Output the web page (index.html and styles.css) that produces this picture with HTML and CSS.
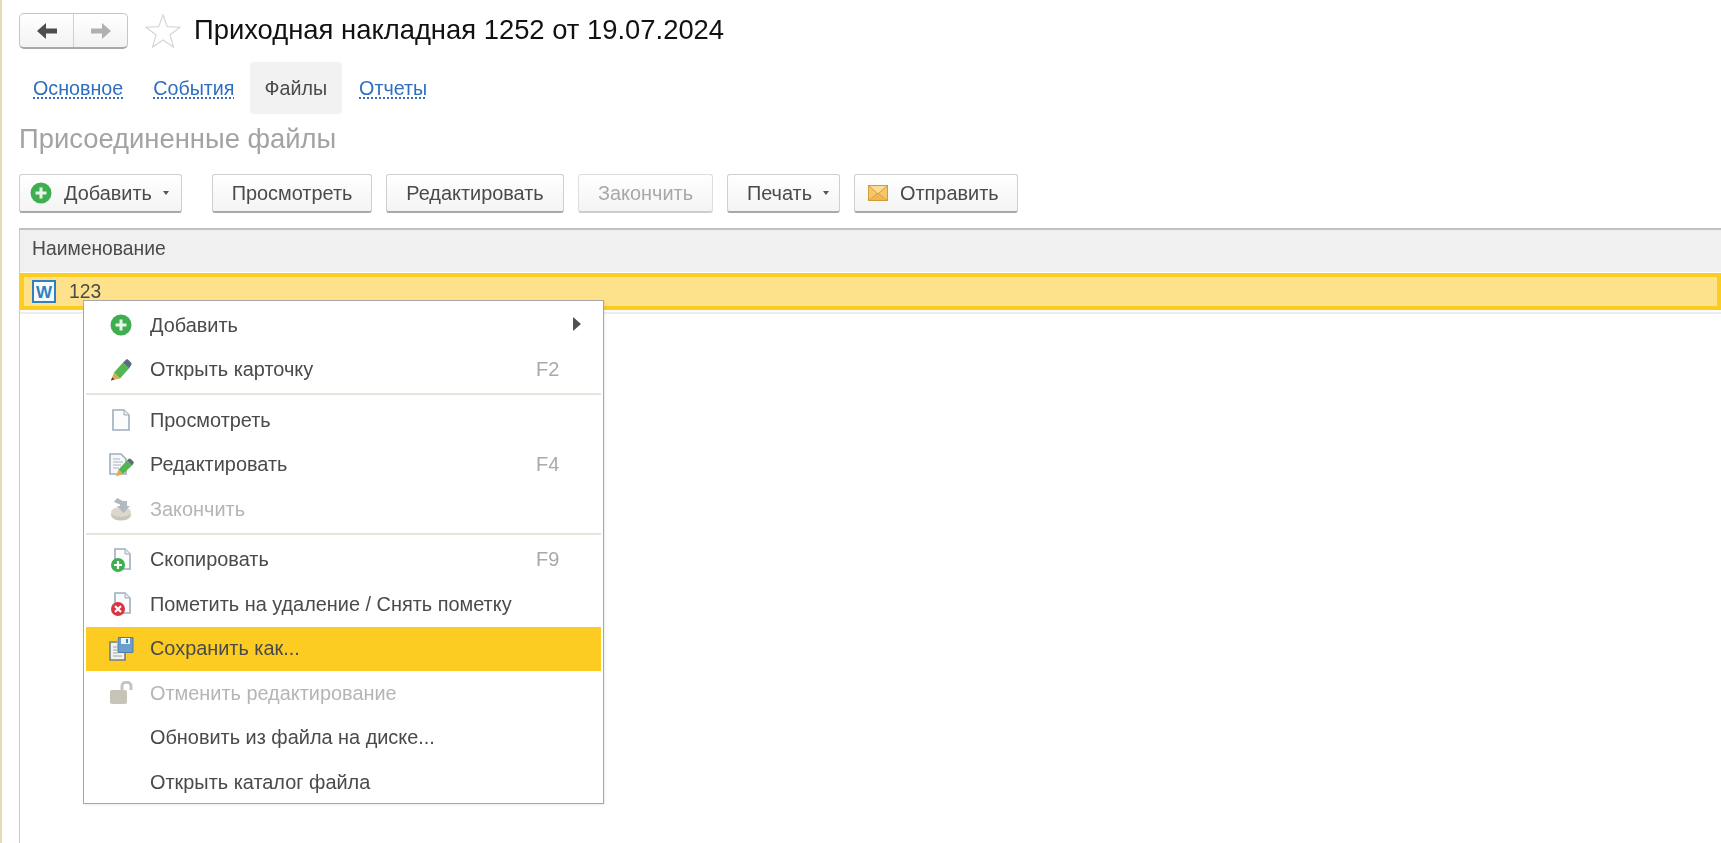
FILE: index.html
```html
<!DOCTYPE html>
<html lang="ru">
<head>
<meta charset="utf-8">
<title>Приходная накладная 1252</title>
<link rel="stylesheet" href="styles.css">
</head>
<body>
<div class="page">
  <header class="titlebar">
    <div class="navgroup">
      <button class="navbtn"><svg width="22" height="18" viewBox="0 0 22 18"><path d="M1 9 10 1v5.500h11v5H10V17z" fill="#4d4d4d"/></svg></button>
      <button class="navbtn"><svg width="22" height="18" viewBox="0 0 22 18"><path d="M21 9 12 1v5.500H1v5h11V17z" fill="#b0b0b0"/></svg></button>
    </div>
    <svg class="star" width="36" height="36" viewBox="0 0 36 36"><path d="M18 2l4.300 11.600 12.700.6-10 7.700 3.500 12.100L18 26.900 7.500 34l3.500-12.100-10-7.700 12.700-.6z" fill="#fff" stroke="#d3d7da" stroke-width="1.200"/></svg>
    <h1 class="title">Приходная накладная 1252 от 19.07.2024</h1>
  </header>
  <nav class="tabs">
    <a class="tab">Основное</a>
    <a class="tab">События</a>
    <a class="tab tab-active">Файлы</a>
    <a class="tab tab-last">Отчеты</a>
  </nav>
  <h2 class="heading">Присоединенные файлы</h2>
  <div class="toolbar">
    <button class="btn btn-add"><svg class="plus" width="22" height="22" viewBox="0 0 22 22"><circle cx="11" cy="11" r="10.500" fill="#3fae4e"/><path d="M11 5.500v11M5.500 11h11" stroke="#e8f6ea" stroke-width="3"/></svg>Добавить<span class="caret"></span></button>
    <button class="btn btn-view">Просмотреть</button>
    <button class="btn btn-edit">Редактировать</button>
    <button class="btn btn-end" disabled>Закончить</button>
    <button class="btn btn-print">Печать<span class="caret"></span></button>
    <button class="btn btn-send"><svg class="mail" width="20" height="16" viewBox="0 0 20 16"><rect x=".5" y=".5" width="19" height="15" fill="#f6c766" stroke="#d39a3a"/><path d="M1 15l9-7 9 7" fill="#f1b650" stroke="#dca548"/><path d="M1 1l9 8 9-8" fill="#fbdc93" stroke="#d39a3a"/></svg>Отправить</button>
  </div>
  <section class="table">
    <div class="thead">Наименование</div>
    <div class="row"><svg class="word" width="24" height="23" viewBox="0 0 24 23"><rect x="1" y="1" width="22" height="21" fill="#f7fbfd" stroke="#2f7fc1" stroke-width="2"/><text x="12" y="18" text-anchor="middle" class="word-w">W</text></svg><span>123</span></div>
    <div class="rowline"></div>
  </section>
  <div class="menu">
    <div class="item"><span class="ic"><svg width="22" height="22" viewBox="0 0 22 22"><circle cx="11" cy="11" r="10.500" fill="#3fae4e"/><path d="M11 5.500v11M5.500 11h11" stroke="#e8f6ea" stroke-width="3"/></svg></span><span class="lbl">Добавить</span><span class="arrow"></span></div>
    <div class="item"><span class="ic"><svg width="22" height="22" viewBox="0 0 22 22"><path d="M1 21.500l3-8 6 6z" fill="#e3a94f"/><path d="M1 21.500l1.200-3.300 2.200 2.200z" fill="#444"/><path d="M4 13.500L13 3.500l6 6-9 10z" fill="#55b553"/><path d="M13 3.500l3-2.700c.8-.6 1.500-.6 2.200 0l3 3c.6.700.6 1.400 0 2.200L19 9.500z" fill="#5a6b7c"/></svg></span><span class="lbl">Открыть карточку</span><span class="key">F2</span></div>
    <div class="sep"></div>
    <div class="item"><span class="ic"><svg width="18" height="22" viewBox="0 0 18 22"><path d="M1 1h11l5 5v15H1z" fill="#fbfcfd" stroke="#9fadba" stroke-width="1.600"/><path d="M12 1v5h5" fill="#e6ebef" stroke="#9fadba"/></svg></span><span class="lbl">Просмотреть</span></div>
    <div class="item"><span class="ic"><svg width="25" height="24" viewBox="0 0 25 24"><path d="M1 1h11l5 5v15H1z" fill="#f6f8fa" stroke="#9fadba" stroke-width="1.600"/><path d="M4 6h7M4 9h10M4 12h8M4 15h6" stroke="#a9b5c0"/><path d="M7 23.500l2.500-7 4.500 4.500z" fill="#e3a94f"/><path d="M9.500 16.500L18 7.500l5 5-9 8.500z" fill="#55b553"/><path d="M18 7.500l1.500-1.500c.8-.7 1.600-.7 2.300 0l2.500 2.500c.6.700.6 1.500 0 2.300L23 12.500z" fill="#5a6b7c"/></svg></span><span class="lbl">Редактировать</span><span class="key">F4</span></div>
    <div class="item off"><span class="ic"><svg width="22" height="24" viewBox="0 0 22 24"><ellipse cx="11" cy="18" rx="10" ry="5.500" fill="#c9c5b8"/><ellipse cx="11" cy="15" rx="10" ry="5" fill="#dad7cc"/><path d="M4 5l3-4 6 3h4v5h3l-6.500 7L7 9h3V7.500z" fill="#b2b9bf"/></svg></span><span class="lbl">Закончить</span></div>
    <div class="sep"></div>
    <div class="item"><span class="ic"><svg width="22" height="24" viewBox="0 0 22 24"><path d="M5 1h10l5 5v15H5z" fill="#fbfcfd" stroke="#9fadba" stroke-width="1.600"/><path d="M15 1v5h5" fill="#e6ebef" stroke="#9fadba"/><circle cx="8" cy="17" r="7" fill="#3fae4e"/><path d="M8 13v8M4 17h8" stroke="#fff" stroke-width="2.200"/></svg></span><span class="lbl">Скопировать</span><span class="key">F9</span></div>
    <div class="item"><span class="ic"><svg width="22" height="24" viewBox="0 0 22 24"><path d="M5 1h10l5 5v15H5z" fill="#fbfcfd" stroke="#9fadba" stroke-width="1.600"/><path d="M15 1v5h5" fill="#e6ebef" stroke="#9fadba"/><circle cx="8" cy="17" r="7" fill="#d9343f"/><path d="M5 14l6 6M11 14l-6 6" stroke="#fff" stroke-width="2.200"/></svg></span><span class="lbl">Пометить на удаление / Снять пометку</span></div>
    <div class="item hot"><span class="ic"><svg width="25" height="25" viewBox="0 0 25 25"><path d="M1 6h15v18H1z" fill="#f2f2ea" stroke="#6f7f8c" stroke-width="1.600"/><path d="M4 11h5M4 14h5M4 17h5M4 20h9" stroke="#9aa6b0"/><path d="M8 1h16v16H8z" fill="#f2f2ea"/><path d="M9 1.500h15v15H9z" fill="#6c9fce" stroke="#4e7ea8"/><path d="M12 2h9v6h-9z" fill="#eef3f7"/><path d="M17 3h2v4h-2z" fill="#4e7ea8"/></svg></span><span class="lbl">Сохранить как...</span></div>
    <div class="item off"><span class="ic"><svg width="24" height="24" viewBox="0 0 24 24"><rect x="1" y="9" width="17" height="14" rx="2" fill="#c6c4b8"/><path d="M13 9V5c0-5 9-5 9 0v4" fill="none" stroke="#c6c4b8" stroke-width="3"/></svg></span><span class="lbl">Отменить редактирование</span></div>
    <div class="item"><span class="ic"></span><span class="lbl">Обновить из файла на диске...</span></div>
    <div class="item"><span class="ic"></span><span class="lbl">Открыть каталог файла</span></div>
  </div>
</div>
</body>
</html>
```
FILE: styles.css
```css
* { box-sizing: border-box; }
html, body { margin: 0; height: 100%; }
body { background: #fff; overflow: hidden; font-family: "Liberation Sans", Arial, sans-serif; color: #4a4a4a; }
.page { position: relative; display: flex; flex-direction: column; height: 843px; border-left: 2px solid #e6dcb4; padding: 10px 0 0 17px; filter: blur(.35px); }
.titlebar { display: flex; align-items: center; height: 42px; flex: none; }
.navgroup { display: flex; width: 109px; height: 36px; border: 1px solid #c6c6c6; border-bottom: 2px solid #a9a9a9; border-radius: 5px; background: linear-gradient(#fff, #f3f3f3); }
.navbtn { flex: 1; border: 0; background: none; padding: 0; display: flex; align-items: center; justify-content: center; }
.navbtn + .navbtn { border-left: 1px solid #d0d0d0; }
.star { margin-left: 17px; }
.title { margin: 0 0 2px 13px; font-size: 27.4px; line-height: 38px; font-weight: 400; color: #111; white-space: nowrap; }
.tabs { display: flex; margin-top: 10px; height: 52px; flex: none; align-items: stretch; }
.tab { display: flex; align-items: center; padding: 0 15px; font-size: 19.7px; color: #2f6fc0; text-decoration: underline dotted #2f6fc0; text-underline-offset: 3px; }
.tab:first-child { padding-left: 14px; }
.tab-last { padding-left: 17px; }
.tab-active { background: #f2f2f2; border-radius: 4px; color: #4a4a4a; text-decoration: none; }
.heading { margin: 11px 0 0; font-size: 27.4px; line-height: 28px; font-weight: 400; color: #a3a3a3; flex: none; }
.toolbar { display: flex; margin-top: 21px; height: 39px; gap: 14px; flex: none; }
.btn { height: 39px; font: 19.9px "Liberation Sans", Arial, sans-serif; color: #4a4a4a; border: 1px solid #cfcfcf; border-bottom: 2px solid #a8a8a8; border-radius: 3px; background: linear-gradient(#fff, #f4f4f4); padding: 0; display: flex; align-items: center; justify-content: center; }
.btn-add { width: 163px; margin-right: 16px; padding-left: 10px; justify-content: flex-start; }
.btn-view { width: 160px; }
.btn-edit { width: 178px; }
.btn-end { width: 135px; color: #a8a8a8; border-color: #dedede; border-bottom-color: #cdcdcd; }
.btn-print { width: 113px; padding-left: 9px; }
.btn-send { width: 164px; padding-left: 13px; justify-content: flex-start; }
.plus { margin-right: 12px; }
.mail { margin-right: 12px; }
.caret { margin-left: 11px; border: 3px solid transparent; border-top: 4px solid #555; border-bottom: 0; }
.table { flex: 1; margin-top: 15px; border-top: 2px solid #c0c0c0; border-left: 1px solid #c8c8c8; }
.thead { height: 42px; background: #f0f0f0; padding: 0 0 5px 12px; font-size: 19.3px; display: flex; align-items: center; }
.row { display: flex; align-items: center; height: 37px; margin-top: 1px; background: #fee28b; border: 4px solid #fccc23; padding-left: 8px; font-size: 19.3px; gap: 13px; }
.word { flex: none; }
.word-w { font: 700 17px "Liberation Sans", Arial, sans-serif; fill: #2f7fc1; }
.rowline { height: 2px; margin-top: 2px; background: #ececec; }
.menu { position: absolute; left: 81px; top: 300px; width: 521px; height: 504px; background: #fff; border: 1px solid #a8a8a8; box-shadow: 1px 1px 2px rgba(0,0,0,.08); padding: 2px 2px 0; font-size: 19.9px; }
.item { display: flex; align-items: center; height: 44.5px; }
.ic { width: 64px; flex: none; display: flex; justify-content: center; padding-left: 6px; }
.lbl { flex: 1; white-space: nowrap; }
.key { width: 65px; color: #a9a9a9; }
.arrow { width: 0; height: 0; margin: 0 20px 3px 0; border: 7px solid transparent; border-left: 8px solid #505050; border-right: 0; }
.off { color: #b5b5b5; }
.hot { background: #fccc23; }
.sep { height: 2px; margin: 1px 0 3px; background: #e8e4da; }
```
